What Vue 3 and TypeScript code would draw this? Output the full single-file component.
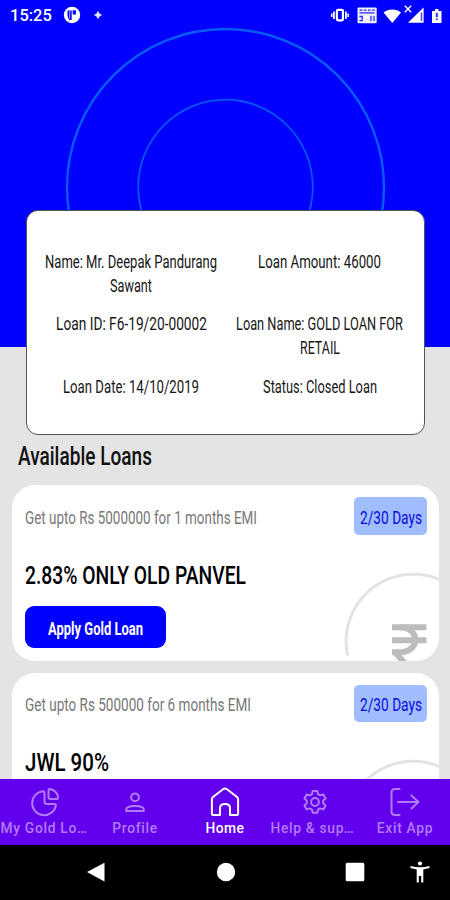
<script setup lang="ts">
import { h } from 'vue'

interface FitProps {
  text: string
  w: number
  size: number
  line: number
  base: number
}

// One line of condensed lettering, squeezed to a fixed advance width.
const FitText = (p: FitProps) =>
  h('svg', { width: p.w, height: p.line, viewBox: `0 0 ${p.w} ${p.line}`, class: 'fit' }, [
    h(
      'text',
      { x: 0, y: p.base, 'font-size': p.size, textLength: p.w, lengthAdjust: 'spacingAndGlyphs', fill: 'currentColor' },
      p.text,
    ),
  ])
FitText.props = ['text', 'w', 'size', 'line', 'base']

interface Line {
  text: string
  w: number
}

const details: Line[][] = [
  [{ text: 'Name: Mr. Deepak Pandurang', w: 172 }, { text: 'Sawant', w: 42 }],
  [{ text: 'Loan Amount: 46000', w: 123 }],
  [{ text: 'Loan ID: F6-19/20-00002', w: 151 }],
  [{ text: 'Loan Name: GOLD LOAN FOR', w: 167 }, { text: 'RETAIL', w: 40 }],
  [{ text: 'Loan Date: 14/10/2019', w: 136 }],
  [{ text: 'Status: Closed Loan', w: 114 }],
]

const loans = [
  { note: { text: 'Get upto Rs 5000000 for 1 months EMI', w: 232 }, title: { text: '2.83% ONLY OLD PANVEL', w: 221 } },
  { note: { text: 'Get upto Rs 500000 for 6 months EMI', w: 226 }, title: { text: 'JWL 90%', w: 84 } },
]

const tabs = [
  { id: 'gold', label: 'My Gold Lo…' },
  { id: 'profile', label: 'Profile' },
  { id: 'home', label: 'Home' },
  { id: 'help', label: 'Help & sup…' },
  { id: 'exit', label: 'Exit App' },
]
</script>

<template>
  <div class="screen">
    <main class="content">
      <section class="hero">
        <svg class="rings" width="450" height="347" viewBox="0 0 450 347" fill="none">
          <circle cx="225.5" cy="187.5" r="158.5" stroke="#085cf4" stroke-width="2.4" />
          <circle cx="225.5" cy="187" r="87.3" stroke="#0854f4" stroke-width="1.8" />
        </svg>
        <header class="status">
          <span class="clock">15:25</span>
          <svg class="app-dot" width="18" height="18" viewBox="0 0 18 18">
            <circle cx="9" cy="9" r="8.2" fill="#fff" />
            <path d="M4.5 4.5h4.2v9.5H6.5Q4.5 12 4.5 9zM9.7 4.2h3.2v4.4H9.7z" fill="#00f" />
            <path d="M6 4.5h1.2v8H6z" fill="#8a8aff" />
          </svg>
          <svg width="10" height="10" viewBox="0 0 10 10"><path d="M5 .8 6.5 3.5 9.2 5 6.5 6.5 5 9.2 3.5 6.5.8 5 3.5 3.5z" fill="#e3e3ff" /></svg>
          <svg class="tray" width="114" height="22" viewBox="0 0 114 22">
            <g fill="none" stroke="#fff">
              <rect x="6.9" y="5.8" width="6" height="10.5" rx="1" stroke-width="2.2" />
              <path d="M3.9 7.5v7.5M15.9 7.5v7.5" stroke-width="1.8" />
              <path d="M1.7 9.5v3.5M18.1 9.5v3.5" stroke-width="1.5" />
            </g>
            <rect x="27.5" y="3.5" width="19.2" height="15.8" rx="1" fill="#eeeeff" />
            <path d="M29.5 6.2h3M34 6.2h2.5M38 6.2h2.5M42 6.2h2.7M29.5 8.8h15M29.4 12.5h2.8v4.2h-2.8M41 12v5M44 12v5" stroke="#2929ff" stroke-width="1.3" fill="none" />
            <path d="M33.5 12h5l-2.5 3z" fill="#fff" />
            <path d="M53.5 8.5C58.5 4.6 66.2 4.6 71 8.5L62.3 19z" fill="#fff" />
            <path d="M74.8 1.7l6.4 6.6M81.2 1.7l-6.4 6.6" stroke="#fff" stroke-width="1.4" />
            <path d="M93.6 3.5v15.3H78z" fill="#fff" />
            <path d="M90.7 8.5h1.6v8.5h-1.6z" fill="#4a4aff" />
            <path d="M102 7h3V5h3.5v2h3v12H102z" fill="#fff" />
            <path d="M105.8 8.7h2v4.6h-2zM105.8 14.4h2v1.6h-2z" fill="#33f" />
          </svg>
        </header>
      </section>

      <section class="details">
        <div v-for="(cell, i) in details" :key="i" class="cell">
          <FitText v-for="l in cell" :key="l.text" :text="l.text" :w="l.w" :size="17.5" :line="24.3" :base="18.2" />
        </div>
      </section>

      <h2 class="heading"><FitText text="Available Loans" :w="134" :size="26" :line="30" :base="22.3" /></h2>

      <article v-for="loan in loans" :key="loan.title.text" class="loan">
        <svg class="watermark" width="96" height="90" viewBox="0 0 96 90">
          <path d="M4.6 84.5A67 67 0 0 1 70 3.3A67 67 0 0 1 137 70.3" fill="none" stroke="#e3e3e3" stroke-width="3" />
          <g fill="none" stroke="#bdbdbd" stroke-width="6">
            <path d="M49 56.3h34.5M49 69.3h34.5" />
            <path d="M57 56.3C77.500 56.3 77.500 81.2 57 81.2H49M51 80l15 17" />
          </g>
        </svg>
        <div class="top">
          <FitText class="note" :text="loan.note.text" :w="loan.note.w" :size="17.6" :line="24" :base="19.5" />
          <span class="badge"><FitText text="2/30 Days" :w="62" :size="17.8" :line="24" :base="19.5" /></span>
        </div>
        <FitText class="title" :text="loan.title.text" :w="loan.title.w" :size="26.5" :line="30" :base="22.7" />
        <button class="apply"><FitText text="Apply Gold Loan" :w="95" :size="17.8" :line="24" :base="20" /></button>
      </article>
    </main>

    <nav class="tabs">
      <a v-for="tab in tabs" :key="tab.id" class="tab" :class="[tab.id, { active: tab.id === 'home' }]">
        <svg width="32" height="32" viewBox="0 0 32 32" fill="none" stroke="currentColor" stroke-width="2" stroke-linecap="round" stroke-linejoin="round">
          <template v-if="tab.id === 'gold'">
            <path d="M14 5.2A12 12 0 1 0 27 19.2Q26.8 18 25.5 18H18Q15.5 18 15.5 15.5V6.5Q15.5 5.2 14 5.2z" />
            <path d="M19.5 4.4Q19.5 2.8 21 3.1A10 10 0 0 1 29 11.2Q29.4 13 27.8 13H21.5Q19.5 13 19.5 11z" />
          </template>
          <template v-else-if="tab.id === 'profile'">
            <circle cx="16" cy="11.3" r="3.9" />
            <path d="M7.2 25V23.6C7.2 18.9 24.8 18.9 24.8 23.6V25z" />
          </template>
          <template v-else-if="tab.id === 'home'">
            <path d="M2.9 28V13.5Q2.9 12 4 11L14 3.3Q16 1.8 18 3.3L28 11Q29.1 12 29.1 13.5V28Q29.1 29 28 29H21V22Q21 18 16 18T11 22V29H4Q2.9 29 2.9 28z" />
          </template>
          <template v-else-if="tab.id === 'help'">
            <path d="M13.7 5h4.6l.7 3.2 2.1 1.2 3.2-1 2.3 4-2.4 2.2v2.6l2.4 2.2-2.3 4-3.2-1-2.1 1.2-.7 3.2h-4.6l-.7-3.2-2.1-1.2-3.2 1-2.3-4 2.4-2.2v-2.6l-2.4-2.2 2.3-4 3.2 1L13 8.2z" />
            <circle cx="16" cy="16" r="3.9" />
          </template>
          <template v-else>
            <path d="M10.5 3H6Q2.5 3 2.5 6.5V25.5Q2.5 29 6 29H10.5M9 16H29M22.5 9.5 29.5 16 22.5 22.5" />
          </template>
        </svg>
        <span>{{ tab.label }}</span>
      </a>
    </nav>

    <footer class="system">
      <svg width="18" height="20" viewBox="0 0 18 20"><path d="M0 10 17.5 .7V19.5z" fill="#fff" /></svg>
      <svg width="20" height="20" viewBox="0 0 20 20"><circle cx="10" cy="10" r="9.2" fill="#fff" /></svg>
      <svg width="20" height="20" viewBox="0 0 20 20"><rect x=".7" y=".7" width="18.6" height="18.6" rx="1.5" fill="#fff" /></svg>
      <svg class="access" width="20" height="22" viewBox="0 0 20 22" fill="#fff">
        <circle cx="10" cy="2.5" r="2.1" />
        <path d="M.7 5Q10 7.5 19.3 5L19.7 7 13.3 8.5V21.5H11.2V15H8.8V21.5H6.7V8.5L.3 7z" />
      </svg>
    </footer>
  </div>
</template>

<style>
body {
  margin: 0;
}
</style>

<style scoped>
.screen {
  width: 450px;
  height: 900px;
  display: flex;
  flex-direction: column;
  overflow: hidden;
  background: #e4e4e4;
  font-family: Roboto, 'Liberation Sans', sans-serif;
}
.fit {
  display: block;
  flex: none;
  overflow: visible;
}
.content {
  height: 778.5px;
  flex: none;
  overflow: hidden;
}
.hero {
  position: relative;
  height: 347px;
  background: #00f;
}
.rings {
  position: absolute;
  inset: 0;
}
.status {
  position: relative;
  display: flex;
  align-items: center;
  height: 30px;
  padding-left: 10px;
  color: #fff;
}
.clock {
  width: 53px;
  font-size: 16.5px;
  font-weight: 500;
}
.app-dot {
  margin-right: 12px;
}
.tray {
  margin: 0 6.5px 0 auto;
}
.details {
  position: relative;
  box-sizing: border-box;
  width: 399px;
  height: 225px;
  margin: -137px 0 0 26px;
  padding: 38.7px 10px 0 9.5px;
  display: grid;
  grid-template-columns: 189px 188px;
  grid-auto-rows: 62.5px;
  background: #fff;
  border: 1px solid #555;
  border-radius: 12px;
  color: #161616;
}
.cell {
  display: flex;
  flex-direction: column;
  align-items: center;
}
.heading {
  margin: 8px 0 12px 18px;
  color: #111;
  font-weight: 500;
}
.loan {
  position: relative;
  box-sizing: border-box;
  width: 427px;
  height: 175.5px;
  margin: 0 0 12px 12px;
  padding: 12px 12px 0 12.5px;
  background: #fff;
  border-radius: 23px;
  overflow: hidden;
}
.watermark {
  position: absolute;
  right: 0;
  bottom: 0;
}
.top {
  display: flex;
  align-items: center;
  justify-content: space-between;
  margin-bottom: 26px;
}
.note {
  color: #777;
}
.badge {
  width: 73px;
  height: 37.5px;
  display: flex;
  align-items: center;
  justify-content: center;
  border-radius: 5px;
  background: #a0bdff;
  color: #0808df;
}
.title {
  color: #000;
  font-weight: 500;
}
.apply {
  display: flex;
  align-items: center;
  justify-content: center;
  width: 141px;
  height: 42px;
  margin-top: 15.5px;
  padding: 0;
  border: 0;
  border-radius: 9px;
  background: #00f;
  color: #fff;
  font-family: inherit;
  font-weight: 700;
}
.tabs {
  display: grid;
  grid-template-columns: repeat(5, 90px);
  height: 66px;
  flex: none;
  background: #6200ee;
}
.tab {
  display: flex;
  flex-direction: column;
  align-items: center;
  padding-top: 7.5px;
  color: #b27bf6;
  font-size: 13.8px;
  font-weight: 500;
  letter-spacing: 0.7px;
  line-height: 16px;
  white-space: nowrap;
}
.tab span {
  margin-top: 1.5px;
}
.tab.gold span {
  margin-left: -2px;
}
.tab.help span {
  margin-left: -5px;
}
.tab.active {
  color: #fff;
  letter-spacing: 0.5px;
}
.system {
  display: flex;
  flex: 1;
  align-items: center;
  padding-left: 86.5px;
  background: #000;
}
.system svg:nth-child(2) {
  margin-left: 111px;
}
.system svg:nth-child(3) {
  margin-left: 109.5px;
}
.access {
  margin-left: 44.5px;
}
</style>
